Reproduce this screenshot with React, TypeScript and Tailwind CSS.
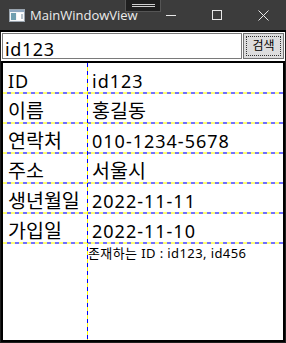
import React from "react";

const rows: [string, string][] = [
  ["ID", "id123"],
  ["이름", "홍길동"],
  ["연락처", "010-1234-5678"],
  ["주소", "서울시"],
  ["생년월일", "2022-11-11"],
  ["가입일", "2022-11-10"],
];

const FONT = { fontFamily: '"Noto Sans", "Noto Sans CJK KR", sans-serif' };

const isKo = (s: string) => /[\uac00-\ud7a3]/.test(s);

function HLine() {
  return (
    <div className="h-[2px] w-full bg-[image:repeating-linear-gradient(to_right,#ffff70_0px,#ffff70_4px,#7070ff_4px,#7070ff_8px)]" />
  );
}

export default function App() {
  return (
    <div
      className="w-[286px] h-[343px] bg-[#1e1e1e] flex flex-col overflow-hidden"
      style={FONT}
    >
      {/* Title bar */}
      <div className="relative h-[30px] bg-[#3c3c3c] flex items-center shrink-0">
        <svg width="16" height="13" viewBox="0 0 16 13" className="ml-[9px]">
          <rect x="0.5" y="0.5" width="15" height="12" fill="#f4f6f8" stroke="#9aa4ae" />
          <rect x="1" y="1" width="14" height="2" fill="#8fa8c0" />
          <rect x="2" y="4" width="5" height="7" fill="#6f9fb0" />
          <rect x="8" y="4" width="6" height="7" fill="#ffffff" />
          <rect x="12" y="5" width="2" height="5" fill="#b8c4cc" />
        </svg>
        <span
          className="ml-[5px] text-[13px] leading-[16px] text-[#ececec]"
          style={{ fontFamily: '"Open Sans", "Noto Sans", sans-serif' }}
        >
          MainWindowView
        </span>
        <div className="ml-auto flex h-full">
          <div className="w-[46px] h-full flex items-center justify-center">
            <div className="w-[10px] h-px bg-[#e8e8e8]" />
          </div>
          <div className="w-[46px] h-full flex items-center justify-center">
            <div className="w-[10px] h-[10px] border border-[#e8e8e8]" />
          </div>
          <div className="w-[46px] h-full flex items-center justify-center">
            <svg width="11" height="11" viewBox="0 0 11 11">
              <path d="M0.5 0.5 L10.5 10.5 M10.5 0.5 L0.5 10.5" stroke="#e8e8e8" strokeWidth="1" />
            </svg>
          </div>
        </div>
        {/* debug adorner toolbar */}
        <div className="absolute left-[125px] top-0 w-[36px] h-[12px] bg-[#1f1f1f] border border-[#555] border-t-0 flex flex-col items-center justify-center gap-[1px]">
          <div className="w-[23px] h-px bg-[#cfcfcf]" />
          <div className="w-[23px] h-px bg-[#cfcfcf]" />
        </div>
      </div>
      <div className="h-[2px] bg-black shrink-0" />

      {/* Client */}
      <div className="flex-1 mx-[1px] mb-[1px] bg-white flex flex-col">
        <div className="flex pl-[1px] pr-[1px] pt-[1px] pb-[2px] gap-[1px] h-[29px] shrink-0">
          <div className="flex-1 h-[26px] border border-[#7a7a7a]">
            <div className="pl-[2px] pt-[4px] text-[18px] leading-[22px] tracking-[0.6px] text-black">id123</div>
          </div>
          <div className="w-[41px] h-[26px] bg-[#dddddd] border border-[#707070] p-[2px]">
            <div className="w-full h-full border border-dotted border-[#333] flex items-center justify-center text-[12px] leading-[14px] text-black">
              검색
            </div>
          </div>
        </div>

        <div className="flex-1 border-2 border-black relative">
          <div className="flex flex-col">
            {rows.map(([k, v], i) => (
              <div key={i} className="flex flex-col">
                <div className={`flex ${i === 0 ? "h-[29px]" : "h-[28px]"} leading-[24px] text-black`}>
                  <div
                    className={`w-[84px] pl-[5px] ${i === 0 ? "pt-[6px]" : "pt-[5px]"} whitespace-nowrap ${
                      isKo(k) ? "text-[19.5px]" : "text-[18px] tracking-[1px]"
                    }`}
                  >
                    {k}
                  </div>
                  <div
                    className={`flex-1 pl-[5px] ${i === 0 ? "pt-[6px]" : "pt-[5px]"} whitespace-nowrap ${
                      isKo(v) ? "text-[19.5px]" : "text-[18px] tracking-[1px]"
                    }`}
                  >
                    {v}
                  </div>
                </div>
                <HLine />
              </div>
            ))}
            <div className="flex">
              <div className="w-[84px]" />
              <div className="pl-[1px] pt-[1px] text-[13px] leading-[16px] tracking-[0.4px] text-black whitespace-nowrap">
                존재하는 ID : id123, id456
              </div>
            </div>
          </div>
          <div className="absolute left-[84px] top-0 bottom-0 w-px bg-[image:repeating-linear-gradient(to_bottom,#0000ff_0px,#0000ff_4px,#ffff00_4px,#ffff00_8px)]" />
        </div>
      </div>
    </div>
  );
}
